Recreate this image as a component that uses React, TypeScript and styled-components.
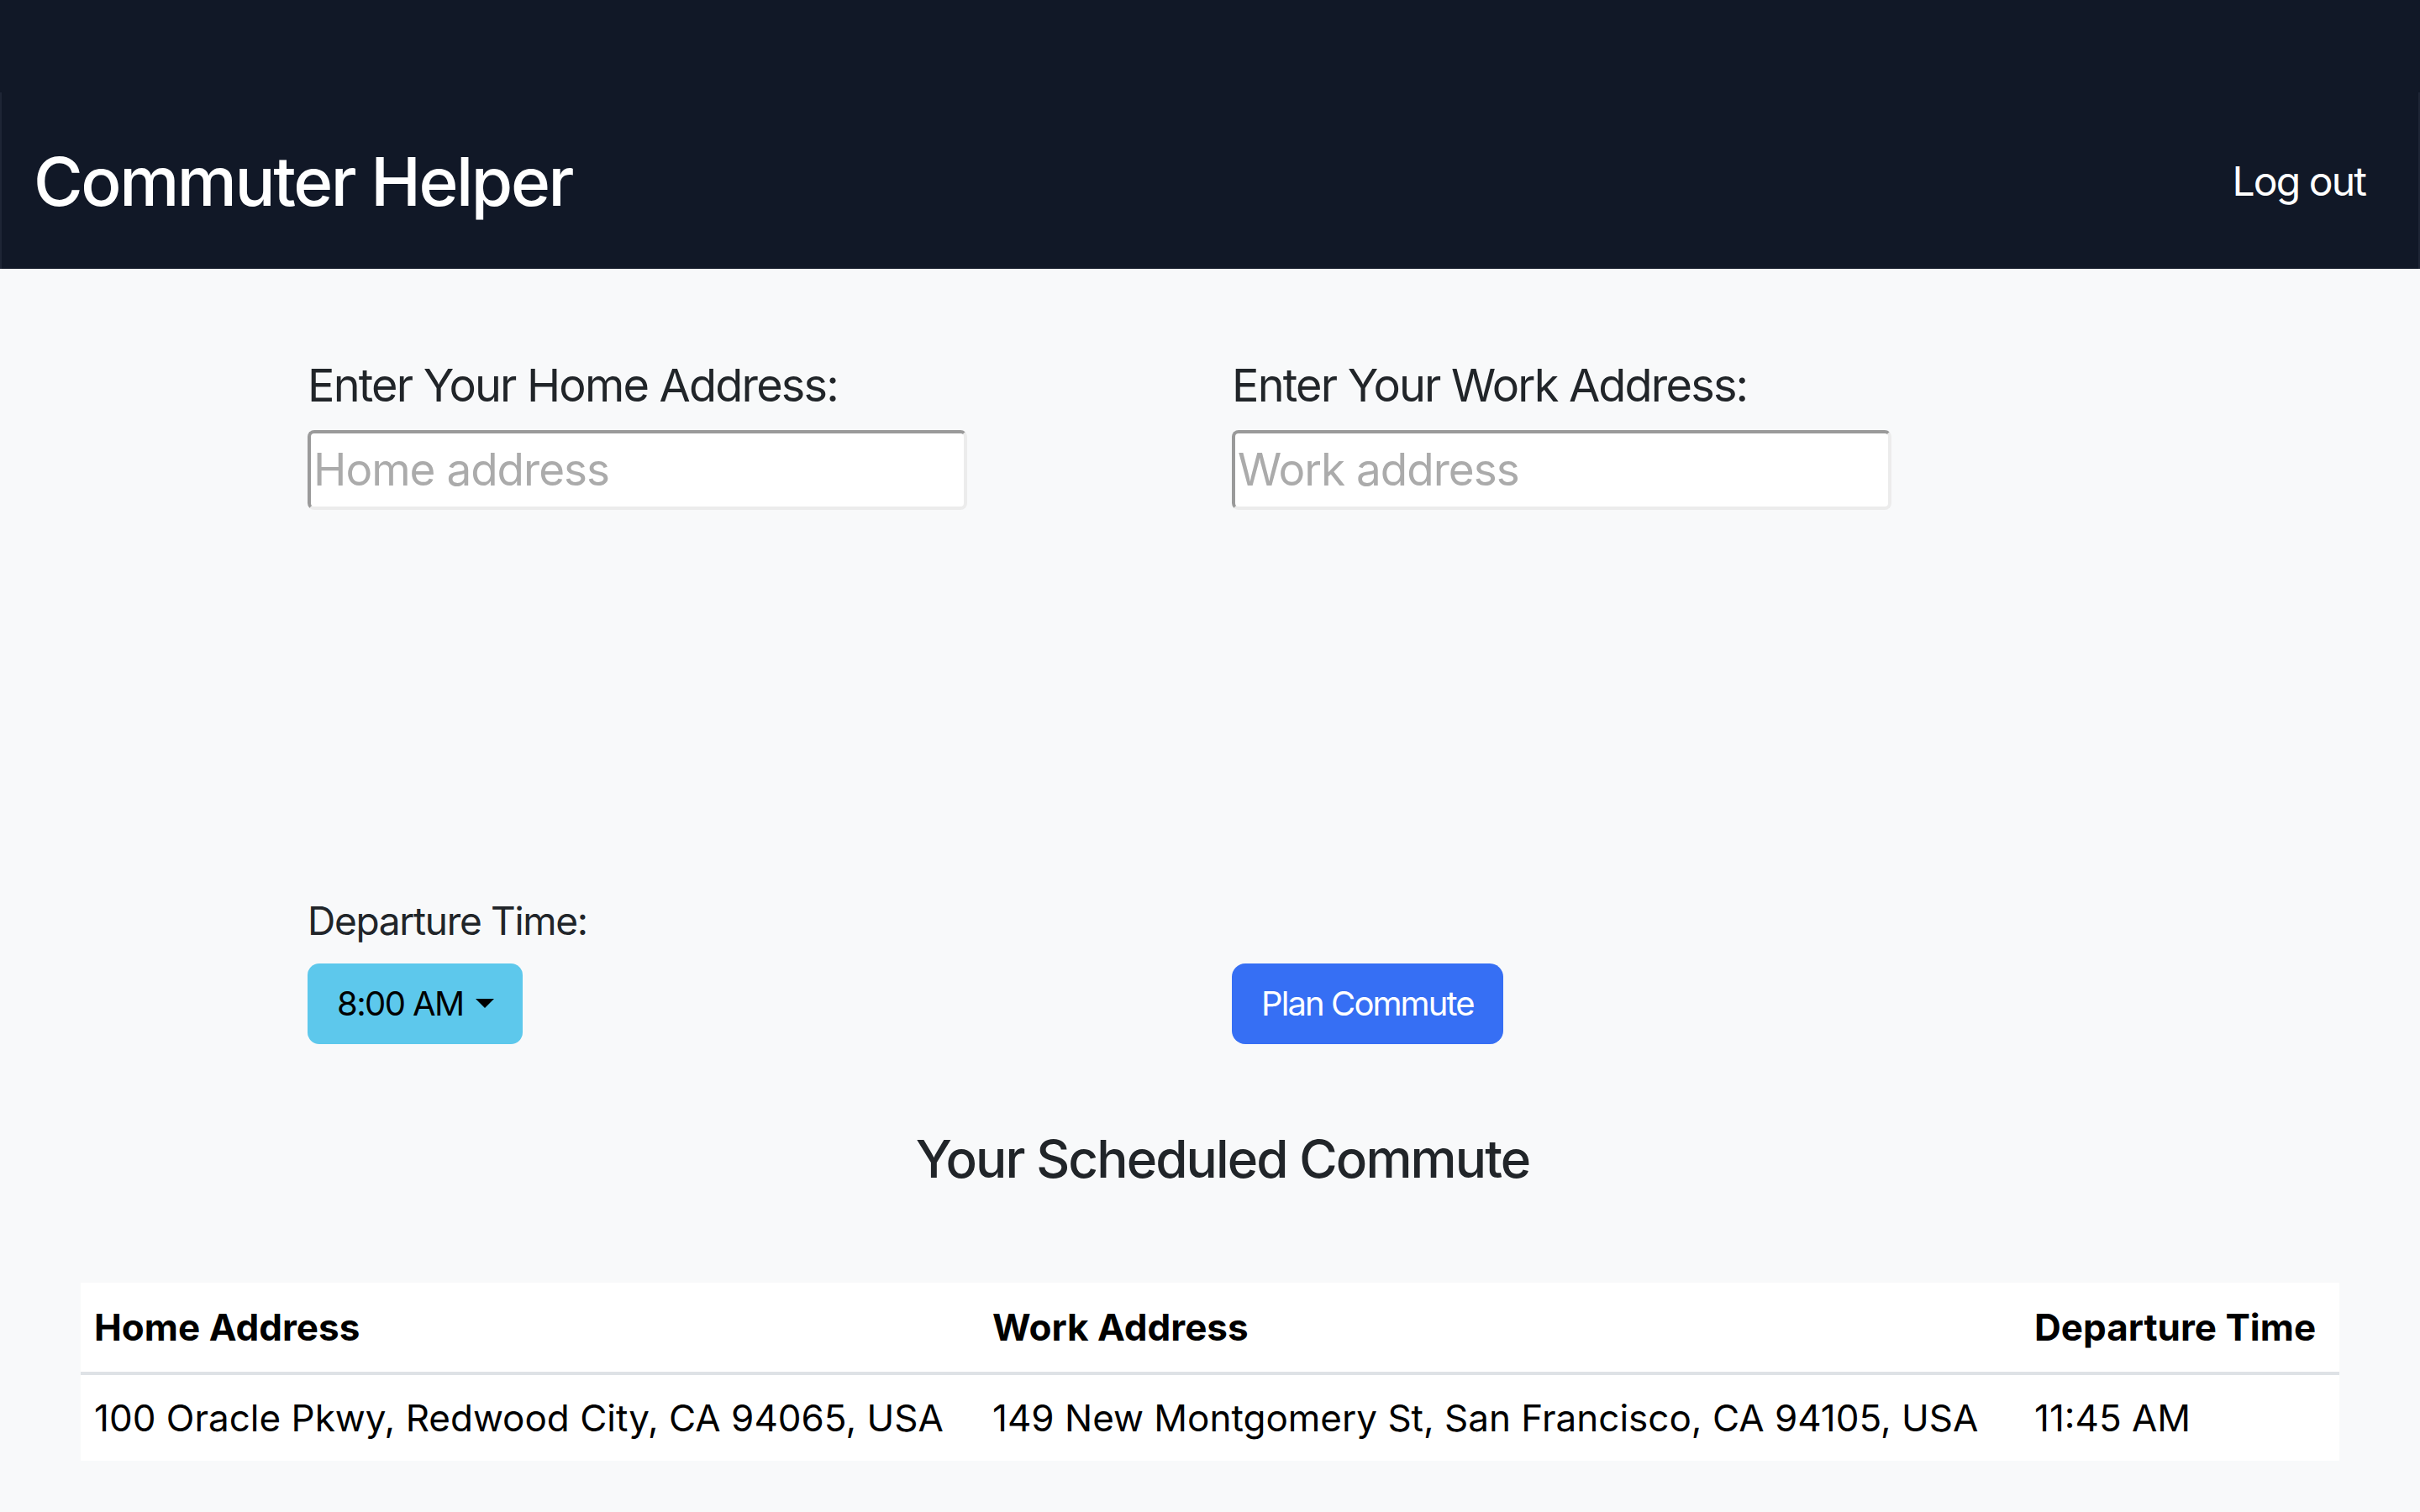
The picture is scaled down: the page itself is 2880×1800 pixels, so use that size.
import styled, { createGlobalStyle } from 'styled-components';

const GlobalStyle = createGlobalStyle`
  html, body {
    margin: 0;
    padding: 0;
    background: #f8f9fa;
    color: #212529;
    font-family: Inter, "Noto Sans", "Liberation Sans", sans-serif;
  }
  * {
    box-sizing: border-box;
  }
`;

const commutes = [
  {
    home: '100 Oracle Pkwy, Redwood City, CA 94065, USA',
    work: '149 New Montgomery St, San Francisco, CA 94105, USA',
    time: '11:45 AM',
  },
];

const App = () => {
  return (
    <Page>
      <GlobalStyle />
      <Header>
        <Navbar>
          <Brand>Commuter Helper</Brand>
          <NavLink href="#">Log out</NavLink>
        </Navbar>
      </Header>

      <Main>
        <FormGrid>
          <Field>
            <Label>Enter Your Home Address:</Label>
            <AddressInput type="text" placeholder="Home address" />
          </Field>
          <Field>
            <Label>Enter Your Work Address:</Label>
            <AddressInput type="text" placeholder="Work address" />
          </Field>
        </FormGrid>

        <ActionGrid>
          <Field>
            <SmallLabel>Departure Time:</SmallLabel>
            <TimeToggle type="button">
              8:00 AM
              <Caret />
            </TimeToggle>
          </Field>
          <Field>
            <PrimaryButton type="button">Plan Commute</PrimaryButton>
          </Field>
        </ActionGrid>

        <SectionTitle>Your Scheduled Commute</SectionTitle>

        <Table>
          <colgroup>
            <col style={{ width: 1069 }} />
            <col style={{ width: 1240 }} />
            <col />
          </colgroup>
          <thead>
            <tr>
              <Th>Home Address</Th>
              <Th>Work Address</Th>
              <Th>Departure Time</Th>
            </tr>
          </thead>
          <tbody>
            {commutes.map((c) => (
              <tr key={c.home}>
                <Td>{c.home}</Td>
                <Td>{c.work}</Td>
                <Td>{c.time}</Td>
              </tr>
            ))}
          </tbody>
        </Table>
      </Main>
    </Page>
  );
};

export default App;

const Page = styled.div`
  min-height: 1800px;
  background: #f8f9fa;
`;

const Header = styled.header`
  background: #111827;
  padding-top: 110px;
`;

const Navbar = styled.nav`
  height: 210px;
  display: flex;
  align-items: center;
  justify-content: space-between;
  padding: 0 63px 0 38px;
  border-left: 2px solid #1e2535;
  border-right: 2px solid #1e2535;
`;

const Brand = styled.div`
  color: #ffffff;
  font-size: 80px;
  font-weight: 500;
  letter-spacing: -2.4px;
`;

const NavLink = styled.a`
  color: #ffffff;
  font-size: 48px;
  letter-spacing: -1.9px;
  text-decoration: none;
`;

const Main = styled.main`
  padding-top: 107px;
`;

const FormGrid = styled.div`
  width: 2200px;
  margin: 0 auto;
  display: grid;
  grid-template-columns: 1fr 1fr;
`;

const ActionGrid = styled(FormGrid)`
  margin-top: 462px;
  align-items: end;
`;

const Field = styled.div`
  padding: 0 26px;
  display: flex;
  flex-direction: column;
  align-items: flex-start;
`;

const Label = styled.label`
  font-size: 54px;
  line-height: 1.2;
  letter-spacing: -1.8px;
  margin-bottom: 20px;
`;

const SmallLabel = styled.label`
  font-size: 46px;
  line-height: 1.2;
  letter-spacing: -1.3px;
  margin-bottom: 23px;
`;

const AddressInput = styled.input`
  width: 785px;
  height: 95px;
  padding: 0 3px;
  font-family: inherit;
  font-size: 53px;
  letter-spacing: -1px;
  color: #212529;
  background: #ffffff;
  border: 4px solid;
  border-color: #9a9a9a #ececec #ececec #9a9a9a;
  border-radius: 8px;
  outline: none;

  &::placeholder {
    color: #ababab;
  }
`;

const BaseButton = styled.button`
  height: 96px;
  border: none;
  font-family: inherit;
  font-size: 40px;
  display: inline-flex;
  align-items: center;
  cursor: pointer;
`;

const TimeToggle = styled(BaseButton)`
  background: #5dc8ec;
  color: #000000;
  padding: 0 34px 0 35px;
  border-radius: 14px;
  letter-spacing: -1.6px;
`;

const Caret = styled.span`
  display: inline-block;
  margin-left: 14px;
  border-top: 11px solid #000000;
  border-left: 11px solid transparent;
  border-right: 11px solid transparent;
`;

const PrimaryButton = styled(BaseButton)`
  background: #366ff4;
  color: #ffffff;
  padding: 0 35px;
  border-radius: 16px;
  letter-spacing: -1.9px;
`;

const SectionTitle = styled.h2`
  margin: 100px 0 0;
  padding-left: 30px;
  text-align: center;
  font-size: 62px;
  font-weight: 500;
  line-height: 1.2;
  letter-spacing: -1.9px;
`;

const Table = styled.table`
  width: calc(100% - 192px);
  margin: 110px 96px 0;
  border-collapse: collapse;
  background: #ffffff;
  table-layout: fixed;
`;

const Th = styled.th`
  height: 108px;
  padding: 0 16px;
  text-align: left;
  font-size: 44px;
  font-weight: 700;
  color: #000000;
  border-bottom: 4px solid #dee2e6;
  white-space: nowrap;
`;

const Td = styled.td`
  height: 104px;
  padding: 0 16px;
  font-size: 44px;
  color: #000000;
  white-space: nowrap;
`;
